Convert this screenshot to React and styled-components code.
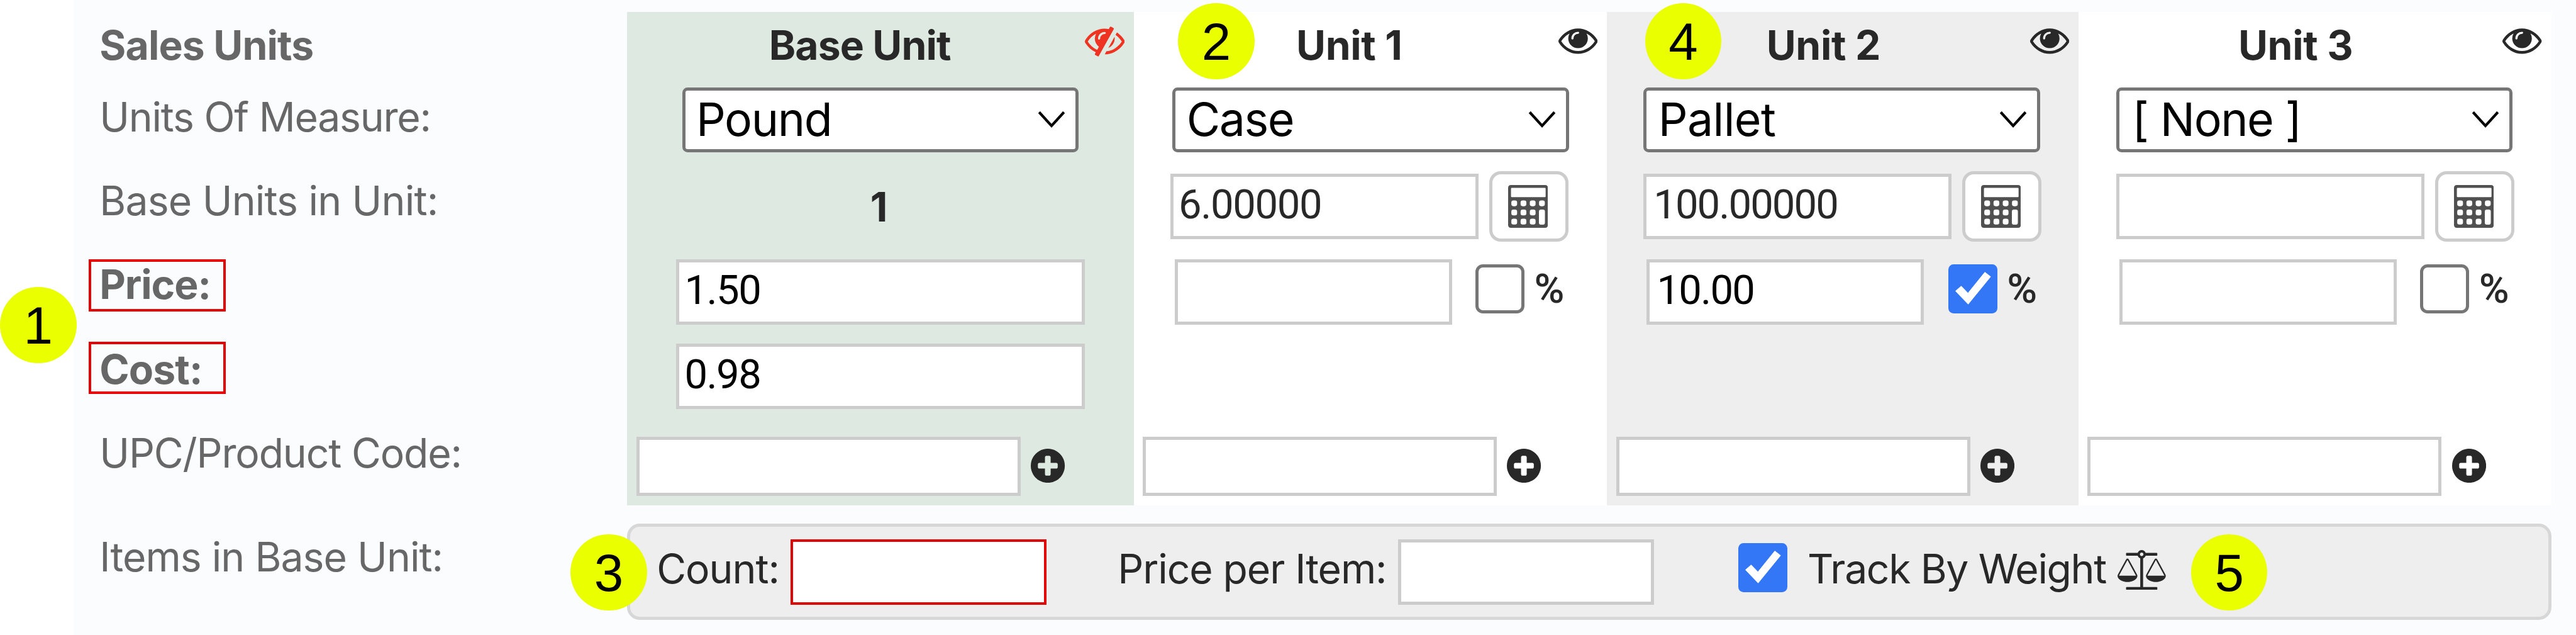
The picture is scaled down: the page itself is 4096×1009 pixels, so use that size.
import React from "react";
import styled, { createGlobalStyle, css } from "styled-components";

// All measures are design units on a 4464-unit-wide board, drawn on a 4096px window.
const u = (n) => `${((n * 4096) / 4464).toFixed(2)}px`;

const ui = `Inter, "Liberation Sans", sans-serif`;
const digits = `Roboto, "Liberation Sans", sans-serif`;

const GlobalStyle = createGlobalStyle`
  *, *::before, *::after { box-sizing: border-box; }
  html, body { margin: 0; padding: 0; background: #ffffff; overflow: hidden; }
`;

const Page = styled.div`
  position: relative;
  width: 4096px;
  height: 1009px;
  padding-left: ${u(127)};
  background: #ffffff;
  font-family: ${ui};
  color: #282828;
  overflow: hidden;
`;

const Panel = styled.main`
  display: flex;
  height: 100%;
  padding-top: ${u(21)};
  background: #fbfcfe;
`;

const Labels = styled.div`
  flex: none;
  width: ${u(960)};
  padding-left: ${u(45.5)};
`;

const Label = styled.div`
  height: ${u(70)};
  margin-top: ${(p) => u(p.$gap)};
  font-size: ${u(70)};
  line-height: ${u(70)};
  font-weight: ${(p) => (p.$bold ? 700 : 400)};
  letter-spacing: ${(p) => u(p.$track)};
  color: #676767;
  white-space: nowrap;
`;

const Content = styled.div`
  flex: none;
  width: ${u(3334)};
`;

const Columns = styled.div`
  display: flex;
  height: ${u(854)};
`;

const Column = styled.section`
  display: grid;
  grid-template-rows: ${[130, 145, 153, 146, 161, 119].map(u).join(" ")};
  flex: none;
  width: ${(p) => u(p.$width)};
  background: ${(p) => p.$tone};
`;

const Row = styled.div`
  display: flex;
  align-items: flex-start;
  padding-left: ${(p) => u(p.$left)};
`;

const Header = styled(Row)`
  justify-content: space-between;
  padding-right: ${u(16)};
  padding-top: ${u(14)};
`;

const Title = styled.h2`
  margin: ${u(9)} 0 0;
  font-size: ${u(70)};
  line-height: ${u(70)};
  font-weight: 700;
  letter-spacing: ${(p) => u(p.$track)};
  white-space: nowrap;
`;

const SelectBox = styled.div`
  display: flex;
  align-items: center;
  justify-content: space-between;
  width: ${u(687.5)};
  height: ${u(113)};
  padding: 0 ${u(17.5)} ${u(1)} ${(p) => u(p.$indent)};
  border: 5px solid #767676;
  border-radius: ${u(9)};
  background: #ffffff;
  color: #000000;
  font-size: ${u(80)};
  line-height: 1;
  letter-spacing: ${(p) => u(p.$track)};
  white-space: nowrap;
`;

const Chevron = styled.svg`
  display: block;
  width: ${u(48)};
  height: ${u(30)};
  margin-top: ${u(0.5)};
`;

const Field = styled.input`
  flex: none;
  width: ${(p) => u(p.$width)};
  height: ${(p) => u(p.$height || 113.5)};
  margin: ${(p) => u(p.$top || 0)} 0 0;
  padding: 0 0 ${u(6.5)} ${(p) => u(p.$indent || 9)};
  border: 5px solid #cccccc;
  border-radius: 0;
  outline: none;
  background: #ffffff;
  color: ${(p) => (p.$soft ? "#282828" : "#000000")};
  font-family: ${digits};
  font-size: ${u(71)};
  letter-spacing: ${(p) => u(p.$track || 0)};
  ${(p) =>
    p.$marked &&
    css`
      border: 4px solid #e00000;
    `}
`;

const Factor = styled.div`
  width: 100%;
  padding-top: ${u(28)};
  font-size: ${u(70)};
  line-height: ${u(70)};
  font-weight: 700;
`;

const CalcButton = styled.button`
  display: flex;
  align-items: center;
  justify-content: center;
  flex: none;
  width: ${u(137.5)};
  height: ${u(122.5)};
  margin-left: ${u(18.7)};
  padding: 0;
  border: 5px solid #cccccc;
  border-radius: ${u(20)};
  background: #ffffff;
`;

const CalcSvg = styled.svg`
  display: block;
  width: ${u(69)};
  height: ${u(74)};
  margin-left: ${u(-4)};
`;

const CheckBox = styled.span`
  display: block;
  flex: none;
  width: ${u(85)};
  height: ${u(85)};
  margin: ${(p) => p.$margin};
  border: ${(p) => (p.$on ? "none" : "5px solid #767676")};
  border-radius: ${(p) => u(p.$on ? 9 : 13)};
  background: ${(p) => (p.$on ? "#3376f6" : "#ffffff")};
  svg {
    display: block;
    width: 100%;
    height: 100%;
  }
`;

const Percent = styled.span`
  margin: ${u(16)} 0 0 ${u(17)};
  font-family: ${digits};
  font-size: ${u(71)};
  line-height: ${u(70)};
  font-weight: 500;
`;

const Icon = styled.svg`
  display: block;
  flex: none;
  width: ${(p) => u(p.$width)};
  height: ${(p) => u(p.$height || p.$width)};
  margin: ${(p) => p.$margin || 0};
  fill: ${(p) => p.$color || "#282828"};
`;

const ItemsBar = styled.section`
  display: flex;
  align-items: center;
  height: ${u(167)};
  margin-top: ${u(32)};
  padding-left: calc(${u(51)} - 5px);
  border: 5px solid #d7d7d7;
  border-radius: ${u(22)};
  background: #eeeeee;
`;

const BarText = styled.span`
  flex: none;
  width: ${(p) => u(p.$width)};
  margin: 0 0 ${u(11)} ${(p) => u(p.$gap || 0)};
  font-size: ${u(70)};
  line-height: ${u(70)};
  letter-spacing: ${(p) => u(p.$track)};
  white-space: nowrap;
`;

// Callouts lie over the form.
const Badge = styled.div`
  position: absolute;
  left: ${(p) => u(p.$x)};
  top: ${(p) => u(p.$y)};
  display: flex;
  align-items: center;
  justify-content: center;
  width: ${u(132.5)};
  height: ${u(132.5)};
  padding-top: ${u(2)};
  border-radius: 50%;
  background: #eaff00;
  color: #000000;
  font-family: "Liberation Sans", Arial, sans-serif;
  font-size: ${u(91)};
  line-height: 1;
`;

const Highlight = styled.div`
  position: absolute;
  left: ${u(153.6)};
  top: ${(p) => u(p.$y)};
  width: ${u(237.8)};
  height: ${u(90.5)};
  border: 4px solid #e60000;
`;

const eyePath =
  "M1664 960q-152-236-381-353 61 104 61 225 0 185-131.5 316.5t-316.5 131.5-316.5-131.5-131.5-316.5q0-121 61-225-229 117-381 353 133 205 333.5 326.5t434.5 121.5 434.5-121.5 333.5-326.5zm-720-384q0-20-14-34t-34-14q-125 0-214.5 89.5t-89.5 214.5q0 20 14 34t34 14 34-14 14-34q0-86 61-147t147-61q20 0 34-14t14-34zm848 384q0 34-20 69-140 230-376.5 368.5t-499.5 138.5-499.5-139-376.5-368q-20-35-20-69t20-69q140-229 376.5-368t499.5-139 499.5 139 376.5 368q20 35 20 69z";
const eyeSlashPath =
  "M555 1335l78-141q-87-63-136-159t-49-203q0-121 61-225-229 117-381 353 167 258 427 375zm389-759q0-20-14-34t-34-14q-125 0-214.5 89.5t-89.5 214.5q0 20 14 34t34 14 34-14 14-34q0-86 61-147t147-61q20 0 34-14t14-34zm363-191q0 7-1 9-106 189-316 567t-315 566l-49 89q-10 16-28 16-12 0-134-70-16-10-16-28 0-12 44-87-143-65-263.5-173t-208.5-245q-20-31-20-69t20-69q153-235 380-371t496-136q89 0 180 17l54-97q10-16 28-16 5 0 18 6t31 15.5 33 18.5 31.5 18.5 19.5 11.5q16 10 16 27zm37 447q0 139-79 253.5t-209 164.5l280-502q8 45 8 84zm448 128q0 35-20 69-39 64-109 145-150 172-347.5 267t-419.5 95l74-132q212-18 392.5-137t301.5-307q-115-179-282-294l63-112q95 64 182.5 153t144.5 186q20 34 20 69z";
const plusPath =
  "M1344 960v-128q0-26-19-45t-45-19h-256v-256q0-26-19-45t-45-19h-128q-26 0-45 19t-19 45v256h-256q-26 0-45 19t-19 45v128q0 26 19 45t45 19h256v256q0 26 19 45t45 19h128q26 0 45-19t19-45v-256h256q26 0 45-19t19-45zm320-64q0 209-103 385.5t-279.5 279.5-385.5 103-385.5-103-279.5-279.5-103-385.5 103-385.5 279.5-279.5 385.5-103 385.5 103 279.5 279.5 103 385.5z";
const beamPath =
  "M1269 256q-14 40-45.5 71.5t-71.5 45.5v1291h608q14 0 23 9t9 23v64q0 14-9 23t-23 9h-1344q-14 0-23-9t-9-23v-64q0-14 9-23t23-9h608v-1291q-40-14-71.5-45.5t-45.5-71.5h-491q-14 0-23-9t-9-23v-64q0-14 9-23t23-9h491q21-57 70-92.5t111-35.5 111 35.5 70 92.5h491q14 0 23 9t9 23v64q0 14-9 23t-23 9h-491zm-181 16q33 0 56.5-23.5t23.5-56.5-23.5-56.5-56.5-23.5-56.5 23.5-23.5 56.5 23.5 56.5 56.5 23.5z";
const panPath =
  "M1728 448l-384 704h768zm448 704q0 73-46.5 131t-117.5 91-144.5 49.5-139.5 16.5-139.5-16.5-144.5-49.5-117.5-91-46.5-131q0-11 35-81t92-174.5 107-195.5 102-184 56-100q18-33 56-33t56 33q4 7 56 100t102 184 107 195.5 92 174.5 35 81z";

const Eye = () => (
  <Icon $width={68} viewBox="0 0 1792 1792"><path d={eyePath} /></Icon>
);
const EyeSlash = () => (
  <Icon $width={69} $color="#ee3322" viewBox="0 0 1792 1792"><path d={eyeSlashPath} /></Icon>
);
const Plus = () => (
  <Icon $width={59} $margin={`${u(21)} 0 0 ${u(18)}`} viewBox="128 128 1536 1536"><path d={plusPath} /></Icon>
);
const Scales = () => (
  <Icon $width={83.7} $height={69} $margin={`0 0 ${u(8)}`} viewBox="0 0 2176 1792">
    <path d={beamPath} />
    <path fillRule="evenodd" d={panPath} />
    <path fillRule="evenodd" d={panPath} transform="translate(-1280 0)" />
  </Icon>
);

const Calculator = () => (
  <CalcSvg viewBox="0 0 69 74">
    <rect width="69" height="74" rx="4.5" fill="#505050" />
    <g fill="#ffffff">
      <rect x="5" y="5" width="60" height="16" rx="1.5" />
      {[10.6, 26.6, 42.6, 58.6].map((x) => <rect key={x} x={x - 5} y="26.7" width="10" height="10" rx="3.6" />)}
      {[10.6, 26.6, 42.6].map((x) => <rect key={x} x={x - 5} y="42.6" width="10" height="10" rx="3.6" />)}
      {[10.6, 26.6, 42.6].map((x) => <rect key={x} x={x - 5} y="58.4" width="10" height="10" rx="3.6" />)}
      <rect x="53.4" y="42.4" width="10.4" height="26.4" rx="3.6" />
    </g>
  </CalcSvg>
);

const Check = ({ on, margin }) => (
  <CheckBox $on={on} $margin={margin}>
    {on && (
      <svg viewBox="0 0 85 85">
        <path d="M12.5 46.3 22.3 37.8 34 50 63.3 13.7 73.2 21.4 34.4 69Z" fill="#ffffff" stroke="#ffffff" strokeWidth="1" strokeLinejoin="round" />
      </svg>
    )}
  </CheckBox>
);

const Select = ({ value, indent, track }) => (
  <SelectBox $indent={indent} $track={track}>
    <span>{value}</span>
    <Chevron viewBox="0 0 48 30">
      <path d="M2.5 2.5 24 26 45.5 2.5" fill="none" stroke="#000000" strokeWidth="4.6" />
    </Chevron>
  </SelectBox>
);

const labels = [
  { text: "Sales Units", gap: 22.6, track: -0.94, bold: true },
  { text: "Units Of Measure:", gap: 54.2, track: -1.35 },
  { text: "Base Units in Unit:", gap: 75.2, track: -0.88 },
  { text: "Price:", gap: 75.2, track: -1.2, bold: true },
  { text: "Cost:", gap: 76.3, track: -1, bold: true },
  { text: "UPC/Product Code:", gap: 74.9, track: -1.25 },
  { text: "Items in Base Unit:", gap: 110.1, track: -1.05 },
];

const units = [
  {
    title: "Unit 1", tone: "#ffffff", width: 819.8, titleLeft: 281.7,
    select: { value: "Case", left: 66.7, indent: 19.5, track: -1.6 },
    factor: { value: "6.00000", left: 63.4, indent: 9, track: -1.5 },
    price: { value: "", left: 71.4, gap: 39.7, on: false },
    codeLeft: 15.4,
  },
  {
    title: "Unit 2", tone: "#eeeeee", width: 817.1, titleLeft: 276.6,
    select: { value: "Pallet", left: 63.6, indent: 20.2, track: -0.7 },
    factor: { value: "100.00000", left: 63.6, indent: 12, track: -2.1 },
    price: { value: "10.00", left: 68.4, gap: 42.2, on: true },
    codeLeft: 16,
  },
  {
    title: "Unit 3", tone: "#ffffff", width: 819.5, titleLeft: 277.2,
    select: { value: "[ None ]", left: 65.5, indent: 22.5, track: -1.6 },
    factor: { value: "", left: 66, indent: 9, track: 0 },
    price: { value: "", left: 71.2, gap: 40.2, on: false },
    codeLeft: 15.5,
  },
];

const BaseColumn = () => (
  <Column $width={877.6} $tone="#dee9e1">
    <Header $left={245.6}>
      <Title $track={-1}>Base Unit</Title>
      <EyeSlash />
    </Header>
    <Row $left={95}><Select value="Pound" indent={19} track={-1.5} /></Row>
    <Row $left={421}><Factor>1</Factor></Row>
    <Row $left={84.8}><Field $width={708.4} $indent={9} $track={-1.7} defaultValue="1.50" /></Row>
    <Row $left={84.8}><Field $width={708.4} $indent={9} $track={-1.7} defaultValue="0.98" /></Row>
    <Row $left={16}><Field $width={665.8} $height={103} /><Plus /></Row>
  </Column>
);

const UnitColumn = ({ unit }) => (
  <Column $width={unit.width} $tone={unit.tone}>
    <Header $left={unit.titleLeft}>
      <Title $track={-0.4}>{unit.title}</Title>
      <Eye />
    </Header>
    <Row $left={unit.select.left}><Select {...unit.select} /></Row>
    <Row $left={unit.factor.left}>
      <Field $soft $width={534} $top={5} $indent={unit.factor.indent} $track={unit.factor.track} defaultValue={unit.factor.value} />
      <CalcButton><Calculator /></CalcButton>
    </Row>
    <Row $left={unit.price.left}>
      <Field $width={481} $indent={13} $track={-2} defaultValue={unit.price.value} />
      <Check on={unit.price.on} margin={`${u(8.4)} 0 0 ${u(unit.price.gap)}`} />
      <Percent>%</Percent>
    </Row>
    <Row $left={0} />
    <Row $left={unit.codeLeft}><Field $width={613.8} $height={103} /><Plus /></Row>
  </Column>
);

export default function App() {
  return (
    <Page>
      <GlobalStyle />
      <Panel>
        <Labels>
          {labels.map((l) => (
            <Label key={l.text} $gap={l.gap} $track={l.track} $bold={l.bold}>{l.text}</Label>
          ))}
        </Labels>
        <Content>
          <Columns>
            <BaseColumn />
            {units.map((unit) => <UnitColumn key={unit.title} unit={unit} />)}
          </Columns>
          <ItemsBar>
            <BarText $width={231.7} $track={-1.1}>Count:</BarText>
            <Field $width={444} $marked />
            <BarText $width={485.3} $gap={123.3} $track={-1.2}>Price per Item:</BarText>
            <Field $width={444} />
            <Check on margin={`0 0 ${u(14)} ${u(145.9)}`} />
            <BarText $width={537.6} $gap={35} $track={-1.5}>Track By Weight</BarText>
            <Scales />
          </ItemsBar>
        </Content>
      </Panel>
      <Highlight $y={449} />
      <Highlight $y={592} />
      <Badge $x={0} $y={496.7}>1</Badge>
      <Badge $x={2041.4} $y={5}>2</Badge>
      <Badge $x={988.8} $y={925}>3</Badge>
      <Badge $x={2850.7} $y={5}>4</Badge>
      <Badge $x={3796.9} $y={925}>5</Badge>
    </Page>
  );
}
